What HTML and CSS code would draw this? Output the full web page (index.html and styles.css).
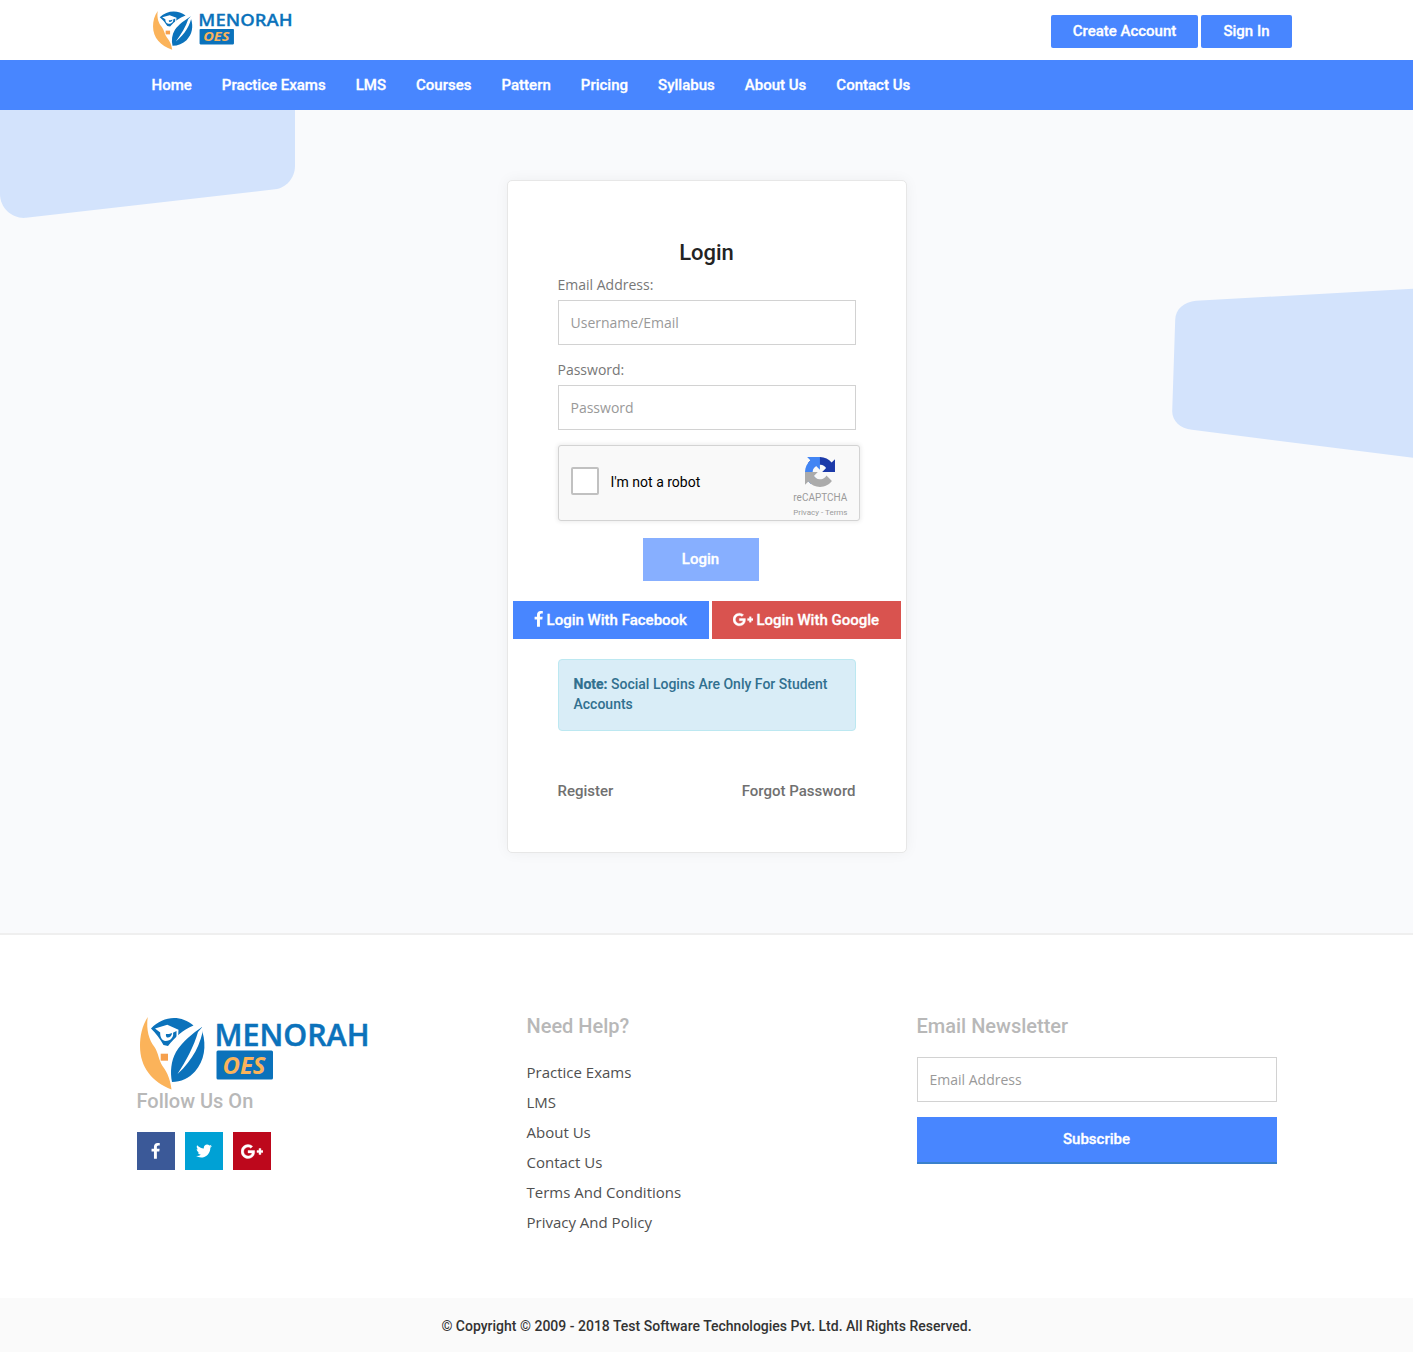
FILE: index.html
```html
<!DOCTYPE html>
<html lang="en">
<head>
<meta charset="utf-8">
<title>Login - Menorah OES</title>
<link rel="stylesheet" href="styles.css">
</head>
<body>
<svg class="sprite" aria-hidden="true">
  <symbol id="logo" viewBox="0 0 240 75" preserveAspectRatio="none">
    <path fill="#fbb35a" d="M12.700 2C7 11 5 21 5 31C5 52 17 67 36.500 74.500C35.500 66 33 58 27.500 51C23.500 45 23.500 38 19.500 32C14 25 11 15 12.700 2Z"/>
    <path fill="#0b72bb" d="M16 13.500C28 .5 46 -.5 58.500 10.500C48 15 40 22 33 31L28.500 30C25 24 21 18 16 13.500Z"/>
    <path fill="#0b72bb" d="M67.500 17C71.500 31 69.500 46 60 56.500C54 63 46 67 37 67C35 57 36 46 41 37C47 27 58 18 67 12Z"/>
    <path fill="#fff" d="M69 10C66 29 58 45 42.500 59C51 46 59 31 63 17Z"/>
    <path fill="#fff" d="M20 13.500L32.300 9.800L43.500 14.700L43 24L41.500 24.500L41.500 16L38 17.700C39 21.500 36 26 30.500 26C26.500 25.500 25 21.500 25.200 17.500Z"/>
    <path fill="#0b72bb" d="M31 19L34 19L37 18C37 21 34.500 23 32 22.500C31 21.500 30.700 20.500 31 19Z"/>
    <path fill="#f6a04d" d="M25.700 38.700H33V45.700H25.700Z"/>
    <text x="79.500" y="30.700" font-family="Open Sans, sans-serif" font-weight="600" font-size="30.500" textLength="155" lengthAdjust="spacingAndGlyphs" fill="#0b72bb" stroke="#0b72bb" stroke-width=".5">MENORAH</text>
    <rect x="81.500" y="35.500" width="56.500" height="29" rx="1.500" fill="#0b72bb"/>
    <text x="87.500" y="58.500" font-family="Open Sans, sans-serif" font-weight="700" font-style="italic" font-size="23.500" textLength="43" lengthAdjust="spacingAndGlyphs" fill="#fbb35a">OES</text>
  </symbol>
  <symbol id="facebook" viewBox="0 0 1792 1792"><path d="M1343 12v264h-157q-86 0-116 36t-30 108v189h293l-39 296h-254v759h-306v-759h-255v-296h255v-218q0-186 104-288.500t277-102.500q147 0 228 12z"/></symbol>
  <symbol id="twitter" viewBox="0 0 1792 1792"><path d="M1684 408q-67 98-162 167 1 14 1 42 0 130-38 259.500t-115.500 248.500-184.500 210.500-258 146-323 54.500q-271 0-496-145 35 4 78 4 225 0 401-138-105-2-188-64.500t-114-159.500q33 5 61 5 43 0 85-11-112-23-185.500-111.500t-73.500-205.500v-4q68 38 146 41-66-44-105-115t-39-154q0-88 44-163 121 149 294.500 238.500t371.500 99.500q-8-38-8-74 0-134 94.500-228.500t228.500-94.500q140 0 236 102 109-21 205-78-37 115-142 178 93-10 186-50z"/></symbol>
  <symbol id="gplus" viewBox="0 0 2304 1792"><path d="M1437 913q0 208-87 370.500t-248 254-369 91.500q-149 0-285-58t-234-156-156-234-58-285 58-285 156-234 234-156 285-58q286 0 491 192l-199 191q-117-113-292-113-123 0-227.500 62t-165.500 168.500-61 232.500 61 232.500 165.500 168.500 227.500 62q83 0 152.500-23t114.500-57.500 78.500-78.500 49-83 21.500-74h-416v-252h692q12 63 12 122zm867-122v210h-209v209h-210v-209h-209v-210h209v-209h210v209h209z"/></symbol>
</svg>

<header class="topbar">
  <a href="#"><svg class="logo-small"><use href="#logo"/></svg></a>
  <div class="actions">
    <a class="btn" href="#">Create Account</a>
    <a class="btn" href="#">Sign In</a>
  </div>
</header>

<nav class="nav">
  <a href="#">Home</a><a href="#">Practice Exams</a><a href="#">LMS</a><a href="#">Courses</a><a href="#">Pattern</a><a href="#">Pricing</a><a href="#">Syllabus</a><a href="#">About Us</a><a href="#">Contact Us</a>
</nav>

<main class="hero">
  <svg class="shapes" viewBox="0 0 1413 824" aria-hidden="true">
    <path d="M0 0H295V56C295 68 286 78 275 79.300L26 107.800C12 109 0 98 0 84Z"/>
    <path d="M1413 178.700L1196 190.800C1184 192 1175.500 199 1175.200 210L1172.200 301C1172 311 1180 318.500 1192 319.800L1413 347.700Z"/>
  </svg>
  <form class="card">
    <h1>Login</h1>
    <label for="email">Email Address:</label>
    <input class="field" id="email" type="text" placeholder="Username/Email">
    <label for="pass">Password:</label>
    <input class="field" id="pass" type="password" placeholder="Password">
    <div class="captcha">
      <span class="box"></span>
      <span class="robot">I'm not a robot</span>
      <div class="brand">
        <svg viewBox="0 0 64 64">
          <path fill="#1c3aa9" d="M64 31.955l-.033-1.370V4.687l-7.160 7.160C50.948 4.674 42.033.093 32.050.093c-10.400 0-19.622 4.960-25.458 12.640l11.736 11.860a15.550 15.550 0 0 1 4.754-5.334c2.050-1.600 4.952-2.906 8.968-2.906.485 0 .860.057 1.135.163 4.976.393 9.288 3.140 11.828 7.124l-8.307 8.307L64 31.953"/>
          <path fill="#4285f4" d="M31.862.094l-1.370.033H4.594l7.160 7.160C4.580 13.147 0 22.060 0 32.046c0 10.400 4.960 19.622 12.640 25.458L24.500 45.768a15.550 15.550 0 0 1-5.334-4.754c-1.600-2.050-2.906-4.952-2.906-8.968 0-.485.057-.860.163-1.135.393-4.976 3.140-9.288 7.124-11.828l8.307 8.307L31.860.095"/>
          <path fill="#ababab" d="M.001 32.045l.033 1.370v25.898l7.160-7.160c5.860 7.173 14.774 11.754 24.760 11.754 10.400 0 19.622-4.960 25.458-12.640l-11.736-11.860a15.550 15.550 0 0 1-4.754 5.334c-2.050 1.600-4.952 2.906-8.968 2.906-.485 0-.860-.057-1.135-.163-4.976-.393-9.288-3.140-11.828-7.124l8.307-8.307c-10.522.040-22.400.066-27.295-.005"/>
        </svg>
        <span class="brand-name">reCAPTCHA</span>
        <span class="terms">Privacy - Terms</span>
      </div>
    </div>
    <button class="submit" type="button">Login</button>
    <div class="social-login">
      <a class="fb" href="#"><svg class="i-fb" viewBox="430 0 920 1792"><use href="#facebook" width="1792" height="1792"/></svg>Login With Facebook</a>
      <a class="gp" href="#"><svg class="i-gp"><use href="#gplus"/></svg>Login With Google</a>
    </div>
    <p class="note"><b>Note:</b> Social Logins Are Only For Student Accounts</p>
    <div class="links"><a href="#">Register</a><a href="#">Forgot Password</a></div>
  </form>
</main>

<footer class="footer">
  <section>
    <svg class="logo-large"><use href="#logo"/></svg>
    <h2 class="follow">Follow Us On</h2>
    <div class="social">
      <a class="s-fb" href="#"><svg><use href="#facebook"/></svg></a>
      <a class="s-tw" href="#"><svg><use href="#twitter"/></svg></a>
      <a class="s-gp" href="#"><svg class="wide"><use href="#gplus"/></svg></a>
    </div>
  </section>
  <section>
    <h2>Need Help?</h2>
    <ul>
      <li>Practice Exams</li><li>LMS</li><li>About Us</li><li>Contact Us</li><li>Terms And Conditions</li><li>Privacy And Policy</li>
    </ul>
  </section>
  <section>
    <h2>Email Newsletter</h2>
    <input class="field" type="email" placeholder="Email Address">
    <button class="subscribe" type="button">Subscribe</button>
  </section>
</footer>
<div class="copyright">© Copyright © 2009 - 2018 Test Software Technologies Pvt. Ltd. All Rights Reserved.</div>
</body>
</html>
```
FILE: styles.css
```css
* { box-sizing: border-box; }
body { margin: 0; background: #fff; font: 14px/20px "Open Sans", sans-serif; color: #707070; }
a { color: inherit; text-decoration: none; }
.sprite { display: none; }
svg { display: block; fill: currentColor; }
h1, h2, p, ul { margin: 0; padding: 0; }

.topbar { display: flex; justify-content: space-between; align-items: flex-start; height: 60px; padding: 10px 121px 0 150px; }
.logo-small { width: 146px; height: 40px; }
.actions { display: flex; gap: 3px; padding-top: 5px; }
.btn { height: 33px; padding: 0 21.700px; border-radius: 2px; background: #4886ff; color: #fff; font: 500 15px/32px Roboto, sans-serif; }
.btn:last-child { width: 91px; padding: 0; text-align: center; }

.nav { display: flex; gap: 30.050px; height: 50px; padding-left: 151.500px; background: #4886ff; color: #fff; font: 500 15px/50px Roboto, sans-serif; }
.btn, .nav, .submit, .subscribe, .social-login { -webkit-text-stroke: .3px #fff; }

.hero { position: relative; height: 825px; padding-top: 70px; background: #f9fafc; border-bottom: 2px solid #efefef; }
.shapes { position: absolute; inset: 0 0 auto 0; width: 100%; height: 824px; fill: #d3e3fc; }
.card { position: relative; width: 400px; height: 673px; margin: 0 auto; padding: 56px 50px 0; background: #fff; border: 1px solid #e7e7e7; border-radius: 5px; box-shadow: 0 0 14px rgba(0, 0, 0, .05); }
.card h1 { margin-bottom: 7px; text-align: center; color: #232323; font: 500 22px/31px Roboto, sans-serif; }
.card label { display: block; margin-bottom: 5px; color: #777; }
.field { display: block; width: 100%; height: 45px; margin: 0 0 15px; padding: 0 12px; border: 1px solid #d2d2d2; border-radius: 0; background: #fff; font: 14px/20px "Open Sans", sans-serif; }
.field::placeholder { color: #999; opacity: 1; }

.captcha { display: flex; align-items: flex-start; width: 302px; height: 76px; margin-bottom: 17px; padding: 21px 11px 0 12px; border: 1px solid #d3d3d3; border-radius: 3px; background: #f9f9f9; box-shadow: 0 0 4px 1px rgba(0, 0, 0, .08); color: #000; font: 14px/17px Roboto, sans-serif; }
.box { width: 28px; height: 28px; border: 2px solid #c1c1c1; border-radius: 2px; background: #fff; }
.robot { margin: 7px 0 0 12px; }
.brand { display: flex; flex-direction: column; align-items: center; margin: -10px 0 0 auto; color: #9b9b9b; white-space: nowrap; }
.brand svg { width: 30px; height: 30px; }
.brand-name { margin-top: 5px; font: 10px/12px Roboto, sans-serif; }
.terms { margin-top: 4px; font: 8px/10px Roboto, sans-serif; }
.submit { display: block; width: 116px; height: 43px; margin: 0 0 20px 85px; padding: 0 0 2px; border: 0; background: #87afff; color: #fff; font: 500 15px/40px Roboto, sans-serif; }
.social-login { display: flex; gap: 3px; margin: 0 -45px 20px; color: #fff; font: 500 15px/38px Roboto, sans-serif; white-space: nowrap; }
.social-login a { display: flex; align-items: center; justify-content: center; height: 38px; }
.fb { width: 196px; background: #4886ff; }
.gp { width: 189px; background: #d9534f; }
.i-fb { width: 9px; height: 17px; margin: -1px 3.500px 0 0; }
.i-gp { width: 20px; height: 17px; margin: -1px 3.500px 0 0; stroke: currentColor; stroke-width: 40px; overflow: visible; }
.note { height: 72px; margin-bottom: 50px; padding: 14px 15px; border: 1px solid #bce8f1; border-radius: 4px; background: #d9edf7; color: #31708f; font: 500 14px/20px Roboto, sans-serif; }
.note b { font-weight: 700; -webkit-text-stroke: .2px #31708f; }
.links { display: flex; justify-content: space-between; font: 500 15px/20px Roboto, sans-serif; }

.footer { display: grid; grid-template-columns: repeat(3, 360px); gap: 30px; height: 363px; padding: 80px 0 0 136.500px; }
.footer h2 { margin: 0 0 20px; color: #b8b8b8; font: 500 20px/22px Roboto, sans-serif; }
.logo-large { width: 240px; height: 75px; margin-left: -1.500px; }
.footer .follow { margin-bottom: 20px; }
.social { display: flex; gap: 10px; }
.social a { display: flex; align-items: center; justify-content: center; width: 38px; height: 38px; color: #fff; }
.social svg { width: 17px; height: 17px; }
.social .s-tw svg { width: 18px; height: 18px; }
.social .wide { width: 22px; margin-left: 1px; stroke: currentColor; stroke-width: 40px; overflow: visible; }
.s-fb { background: #3b5998; }
.s-tw { background: #00a1d5; }
.s-gp { background: #bd081c; }
.footer ul { list-style: none; color: #505050; font-size: 15px; line-height: 30px; }
.subscribe { display: block; width: 100%; height: 47px; padding: 0; border: 0; border-bottom: 2px solid #3a80cb; background: #4886ff; color: #fff; font: 500 15px/45px Roboto, sans-serif; }
.copyright { height: 54px; background: #fafafa; color: #333; text-align: center; font: 500 14px/56px Roboto, sans-serif; }
```
